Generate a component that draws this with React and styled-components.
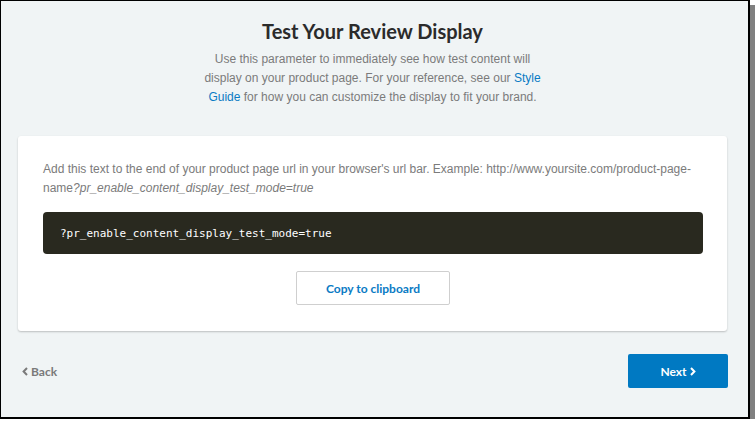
import React from "react";
import styled, { createGlobalStyle } from "styled-components";

const GlobalStyle = createGlobalStyle`
    html, body {
        margin: 0;
        padding: 0;
        background: #ffffff;
    }
`

const Frame = styled.div`
    width: 750px;
    height: 419px;
    box-sizing: border-box;
    border-style: solid;
    border-color: #000;
    border-width: 1px 2px 2px 1px;
    box-shadow: 5px 5px 0 #808080;
    background: #f0f4f5;
    padding: 0 21px 0 17px;
    display: flex;
    flex-direction: column;
`

const Header = styled.div`
    display: flex;
    flex-direction: column;
    align-items: center;
    padding-top: 18px;
`

const Title = styled.h1`
    margin: 0;
    font-family: Lato, "Noto Sans", sans-serif;
    font-weight: 700;
    font-size: 20px;
    line-height: 24px;
    color: #2b2b2b;
`

const Lead = styled.p`
    margin: 7px 0 0;
    max-width: 342px;
    text-align: center;
    font-family: "Liberation Sans", Arial, sans-serif;
    font-size: 12px;
    line-height: 19px;
    color: #7b7b7b;
`

const Link = styled.a`
    color: #0a7bc4;
    text-decoration: none;
`

const Card = styled.div`
    margin-top: 29px;
    background: #ffffff;
    border-radius: 3px;
    box-shadow: 0 1px 2px rgba(0, 0, 0, 0.22);
    padding: 24px 24px 26px 25px;
    display: flex;
    flex-direction: column;
    align-items: center;
`

const Instructions = styled.p`
    margin: 0;
    align-self: stretch;
    font-family: "Liberation Sans", Arial, sans-serif;
    font-size: 12px;
    line-height: 19px;
    color: #7b7b7b;

    em {
        font-style: italic;
    }
`

const CodeBlock = styled.pre`
    margin: 14px 0 0;
    align-self: stretch;
    height: 42px;
    box-sizing: border-box;
    display: flex;
    align-items: center;
    padding: 0 17px;
    background: #29291f;
    border-radius: 4px;
    font-family: "DejaVu Sans Mono", monospace;
    font-size: 11px;
    color: #ffffff;
`

const CopyButton = styled.button`
    margin-top: 17px;
    width: 154px;
    height: 34px;
    background: #ffffff;
    border: 1px solid #cfcfcf;
    border-radius: 2px;
    font-family: Lato, "Noto Sans", sans-serif;
    font-weight: 700;
    font-size: 12px;
    color: #0a7bc4;
    cursor: pointer;
`

const Footer = styled.div`
    margin-top: 23px;
    display: flex;
    justify-content: space-between;
    align-items: center;
`

const BackLink = styled.a`
    margin-left: 4px;
    display: flex;
    align-items: center;
    gap: 3px;
    font-family: Lato, "Noto Sans", sans-serif;
    font-weight: 700;
    font-size: 12px;
    color: #7a7a7a;
    text-decoration: none;
`

const NextButton = styled.button`
    width: 100px;
    height: 34px;
    margin-right: -1px;
    display: flex;
    align-items: center;
    justify-content: center;
    gap: 3px;
    background: #0079c2;
    border: none;
    border-radius: 2px;
    font-family: Lato, "Noto Sans", sans-serif;
    font-weight: 700;
    font-size: 12px;
    color: #ffffff;
    cursor: pointer;
`

const Chevron = ({ dir, color }) => (
    <svg width="6" height="9" viewBox="0 0 6 9">
        <path
            d={dir === "left" ? "M5 1 L1.6 4.5 L5 8" : "M1 1 L4.4 4.5 L1 8"}
            fill="none"
            stroke={color}
            strokeWidth="2"
        />
    </svg>
);

const App = () => {
    return (
        <>
            <GlobalStyle />
            <Frame>
                <Header>
                    <Title>Test Your Review Display</Title>
                    <Lead>
                        Use this parameter to immediately see how test content will
                        display on your product page. For your reference, see our{" "}
                        <Link href="#">Style Guide</Link> for how you can customize the
                        display to fit your brand.
                    </Lead>
                </Header>
                <Card>
                    <Instructions>
                        Add this text to the end of your product page url in your browser's url
                        bar. Example: http://www.yoursite.com/product-page-name
                        <em>?pr_enable_content_display_test_mode=true</em>
                    </Instructions>
                    <CodeBlock>?pr_enable_content_display_test_mode=true</CodeBlock>
                    <CopyButton>Copy to clipboard</CopyButton>
                </Card>
                <Footer>
                    <BackLink href="#">
                        <Chevron dir="left" color="#7a7a7a" />
                        Back
                    </BackLink>
                    <NextButton>
                        Next
                        <Chevron dir="right" color="#ffffff" />
                    </NextButton>
                </Footer>
            </Frame>
        </>
    );
};

export default App;
